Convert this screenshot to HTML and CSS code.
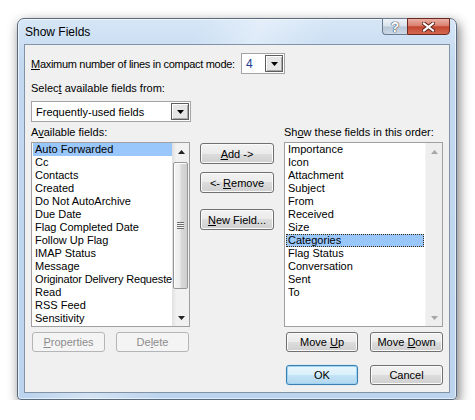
FILE: index.html
```html
<!DOCTYPE html>
<html lang="en">
<head>
  <meta charset="UTF-8" />
  <title>Show Fields</title>
  <link rel="stylesheet" href="styles.css">
</head>
<body>
  <div class="desk">
    <div class="window">
      <div class="titlebar">
        <span class="title">Show Fields</span>
        <div class="caption">
          <span class="cap cap-help">?</span>
          <span class="cap cap-close">
            <svg width="13" height="10" viewBox="0 0 13 10">
              <path d="M2 1.5 L11 8.5 M11 1.5 L2 8.5" stroke="#5a1e16" stroke-width="4" stroke-linecap="square" fill="none" />
              <path d="M2 1.5 L11 8.5 M11 1.5 L2 8.5" stroke="#fff" stroke-width="2.2" stroke-linecap="square" fill="none" />
            </svg>
          </span>
        </div>
      </div>

      <div class="client">
        <div class="row-lines">
          <label class="lines-label"><u>M</u>aximum number of lines in compact mode:</label>
          <div class="combo combo-small">
            <span class="combo-value num">4</span>
            <span class="combo-btn"><svg width="7" height="4" viewBox="0 0 7 4"><path d="M0 0 H7 L3.5 4 Z" fill="#000" /></svg></span>
          </div>
        </div>

        <div class="label label-select">Selec<u>t</u> available fields from:</div>
        <div class="combo combo-wide">
          <span class="combo-value">Frequently-used fields</span>
          <span class="combo-btn"><svg width="7" height="4" viewBox="0 0 7 4"><path d="M0 0 H7 L3.5 4 Z" fill="#000" /></svg></span>
        </div>

        <div class="fields">
          <div class="col">
            <div class="label">A<u>v</u>ailable fields:</div>
            <div class="listbox">
              <ul class="items">
                <li class="sel">Auto Forwarded</li>
                <li>Cc</li>
                <li>Contacts</li>
                <li>Created</li>
                <li>Do Not AutoArchive</li>
                <li>Due Date</li>
                <li>Flag Completed Date</li>
                <li>Follow Up Flag</li>
                <li>IMAP Status</li>
                <li>Message</li>
                <li class="tight">Originator Delivery Requeste</li>
                <li>Read</li>
                <li>RSS Feed</li>
                <li>Sensitivity</li>
              </ul>
              <div class="sb">
                <span class="sb-arrow"><svg width="7" height="4" viewBox="0 0 7 4"><path d="M0 4 H7 L3.5 0 Z" fill="#222" /></svg></span>
                <span class="sb-thumb"><span class="grip"></span></span>
                <span class="sb-track"></span>
                <span class="sb-arrow"><svg width="7" height="4" viewBox="0 0 7 4"><path d="M0 0 H7 L3.5 4 Z" fill="#222" /></svg></span>
              </div>
            </div>
            <div class="btn-row btn-row-left">
              <button class="btn" disabled><u>P</u>roperties</button>
              <button class="btn" disabled>De<u>l</u>ete</button>
            </div>
          </div>

          <div class="col col-mid">
            <button class="btn btn-mid btn-add"><u>A</u>dd -&gt;</button>
            <button class="btn btn-mid btn-remove">&lt;- <u>R</u>emove</button>
            <button class="btn btn-mid btn-new"><u>N</u>ew Field...</button>
          </div>

          <div class="col">
            <div class="label">Sh<u>o</u>w these fields in this order:</div>
            <div class="listbox">
              <ul class="items items-right">
                <li>Importance</li>
                <li>Icon</li>
                <li>Attachment</li>
                <li>Subject</li>
                <li>From</li>
                <li>Received</li>
                <li>Size</li>
                <li class="sel focus">Categories</li>
                <li>Flag Status</li>
                <li>Conversation</li>
                <li>Sent</li>
                <li>To</li>
              </ul>
              <div class="sb sb-off">
                <span class="sb-arrow"><svg width="7" height="4" viewBox="0 0 7 4"><path d="M0 4 H7 L3.5 0 Z" fill="#a6a6a6" /></svg></span>
                <span class="sb-track"></span>
                <span class="sb-arrow"><svg width="7" height="4" viewBox="0 0 7 4"><path d="M0 0 H7 L3.5 4 Z" fill="#a6a6a6" /></svg></span>
              </div>
            </div>
            <div class="btn-row">
              <button class="btn btn-up">Move <u>U</u>p</button>
              <button class="btn">Move <u>D</u>own</button>
            </div>
            <div class="btn-row btn-row-ok">
              <button class="btn btn-default btn-up">OK</button>
              <button class="btn">Cancel</button>
            </div>
          </div>
        </div>
      </div>
    </div>
  </div>
</body>
</html>
```

FILE: styles.css
```css
* {
  margin: 0;
  padding: 0;
  box-sizing: border-box;
}

body {
  background: #fff;
  font-family: "Liberation Sans", Arial, sans-serif;
  font-size: 11px;
  color: #000;
}

.desk {
  padding: 18px 0 0 17px;
}

/* window frame */

.window {
  width: 440px;
  height: 382px;
  display: flex;
  flex-direction: column;
  padding: 0 6px 6px;
  border: 1px solid #5b6b7f;
  border-radius: 7px 7px 4px 4px;
  background:
    linear-gradient(115deg, rgba(255, 255, 255, 0) 30%, rgba(255, 255, 255, 0.35) 40%, rgba(255, 255, 255, 0) 52%),
    linear-gradient(180deg, #d6e6f7 0%, #c3d9f0 12%, #bcd4ee 100%);
  box-shadow: 2px 4px 12px rgba(0, 0, 0, 0.55), inset 0 0 0 1px rgba(255, 255, 255, 0.6);
}

.titlebar {
  height: 25px;
  display: flex;
  justify-content: space-between;
  align-items: flex-start;
}

.title {
  padding: 6px 0 0 1px;
  font-size: 12px;
  line-height: 14px;
}

.caption {
  display: flex;
  margin-top: -1px;
}

.cap {
  height: 17px;
  display: flex;
  align-items: center;
  justify-content: center;
}

.cap-help {
  width: 25px;
  border: 1px solid #6b7b8f;
  border-right: none;
  border-radius: 0 0 0 4px;
  background: linear-gradient(180deg, #eef3f8 0%, #d9e2ec 48%, #b8c6d6 52%, #cdd9e6 100%);
  color: #fff;
  font-size: 14px;
  font-weight: bold;
  text-shadow: 0 0 1px #3a4656, 0 0 1px #3a4656, 0 0 1px #3a4656;
}

.cap-close {
  width: 43px;
  border: 1px solid #6a2a22;
  border-radius: 0 0 4px 0;
  background: linear-gradient(180deg, #eab0a4 0%, #d9806f 45%, #c3452e 52%, #d46a52 100%);
}

/* client area */

.client {
  flex: 1;
  border: 1px solid #8393a6;
  background: #f0f0f0;
  padding: 8px 6px 0;
}

.row-lines {
  display: flex;
  align-items: center;
  height: 21px;
}

.lines-label {
  width: 210px;
  white-space: nowrap;
  letter-spacing: -0.3px;
}

.label {
  line-height: 14px;
  white-space: nowrap;
}

.label-select {
  margin-top: 7px;
}

.combo {
  height: 21px;
  display: flex;
  align-items: center;
  border: 1px solid #a4a4a4;
  background: #fff;
  padding: 1px;
}

.combo-small {
  width: 44px;
}

.combo-wide {
  width: 160px;
  margin-top: 6px;
}

.combo-value {
  flex: 1;
  padding-left: 3px;
}

.num {
  color: #1b3a8c;
  font-size: 12px;
}

.combo-btn {
  width: 18px;
  height: 17px;
  display: flex;
  align-items: center;
  justify-content: center;
  border: 1px solid #5e5e5e;
  background: #e6e6e6;
  box-shadow: inset 1px 1px 0 #fff, inset -1px -1px 0 #a8a8a8;
}

/* three columns */

.fields {
  display: grid;
  grid-template-columns: 159px 74px 159px;
  column-gap: 10px;
  margin-top: 3px;
}

.col {
  display: flex;
  flex-direction: column;
}

.listbox {
  height: 185px;
  margin-top: 3px;
  display: flex;
  border: 1px solid #a0a0a0;
  background: #fff;
}

.items {
  flex: 1;
  list-style: none;
  padding-left: 1px;
  overflow: hidden;
}

.items-right {
  padding-right: 1px;
}

.items li {
  height: 13px;
  line-height: 13px;
  padding-left: 2px;
  white-space: nowrap;
}

.items li.tight {
  letter-spacing: -0.15px;
}

.items li.sel {
  background: #99c7fb;
}

.items li.focus {
  outline: 1px dotted #3d2a10;
  outline-offset: -1px;
}

/* scrollbars */

.sb {
  width: 17px;
  flex-shrink: 0;
  display: flex;
  flex-direction: column;
  background: linear-gradient(90deg, #e4e4e4 0%, #f1f1f1 20%, #f1f1f1 100%);
  border-left: 1px solid #e2e2e2;
}

.sb-arrow {
  height: 17px;
  display: flex;
  align-items: center;
  justify-content: center;
}

.sb-thumb {
  height: 127px;
  margin: 2px 0 0 0;
  width: 15px;
  border: 1px solid #979797;
  border-radius: 2px;
  background: linear-gradient(90deg, #f5f5f5 0%, #ececec 45%, #d9d9d9 55%, #cfcfcf 100%);
  box-shadow: inset 1px 1px 0 #fff;
  display: flex;
  align-items: center;
  justify-content: center;
}

.grip {
  width: 7px;
  height: 7px;
  background: repeating-linear-gradient(180deg, #6e6e6e 0 1px, #f4f4f4 1px 2px);
}

.sb-track {
  flex: 1;
}

.sb-off {
  background: #eeeeee;
  border-left: 1px solid #f4f4f4;
}

/* buttons */

.btn {
  height: 20px;
  width: 73px;
  font-family: inherit;
  font-size: 11px;
  color: #000;
  border: 1px solid #707070;
  border-radius: 3px;
  background: linear-gradient(180deg, #f2f2f2 0%, #ebebeb 50%, #dddddd 50%, #cfcfcf 100%);
  box-shadow: inset 0 0 0 1px #fafafa;
}

.btn:disabled {
  color: #8c8c8c;
  border-color: #b3b6b8;
  background: #f4f4f4;
  box-shadow: none;
}

.btn-mid {
  width: 74px;
  height: 21px;
}

.col-mid {
  padding-top: 18px;
}

.btn-remove {
  margin-top: 8px;
}

.btn-new {
  margin-top: 16px;
}

.btn-row {
  display: flex;
  justify-content: space-between;
  margin-top: 5px;
}

.btn-row-left {
  padding: 0 1px;
}

.btn-up {
  margin-left: 2px;
  width: 72px;
}

.btn-row-ok {
  margin-top: 13px;
}

.btn-default {
  border-color: #3c7fb1;
  background: linear-gradient(180deg, #eaf6fd 0%, #d9f0fc 50%, #c4e4f7 50%, #b3d6ee 100%);
  box-shadow: inset 0 0 0 1px #9ed3f2, 0 0 1px #6ab8e8;
}
```
